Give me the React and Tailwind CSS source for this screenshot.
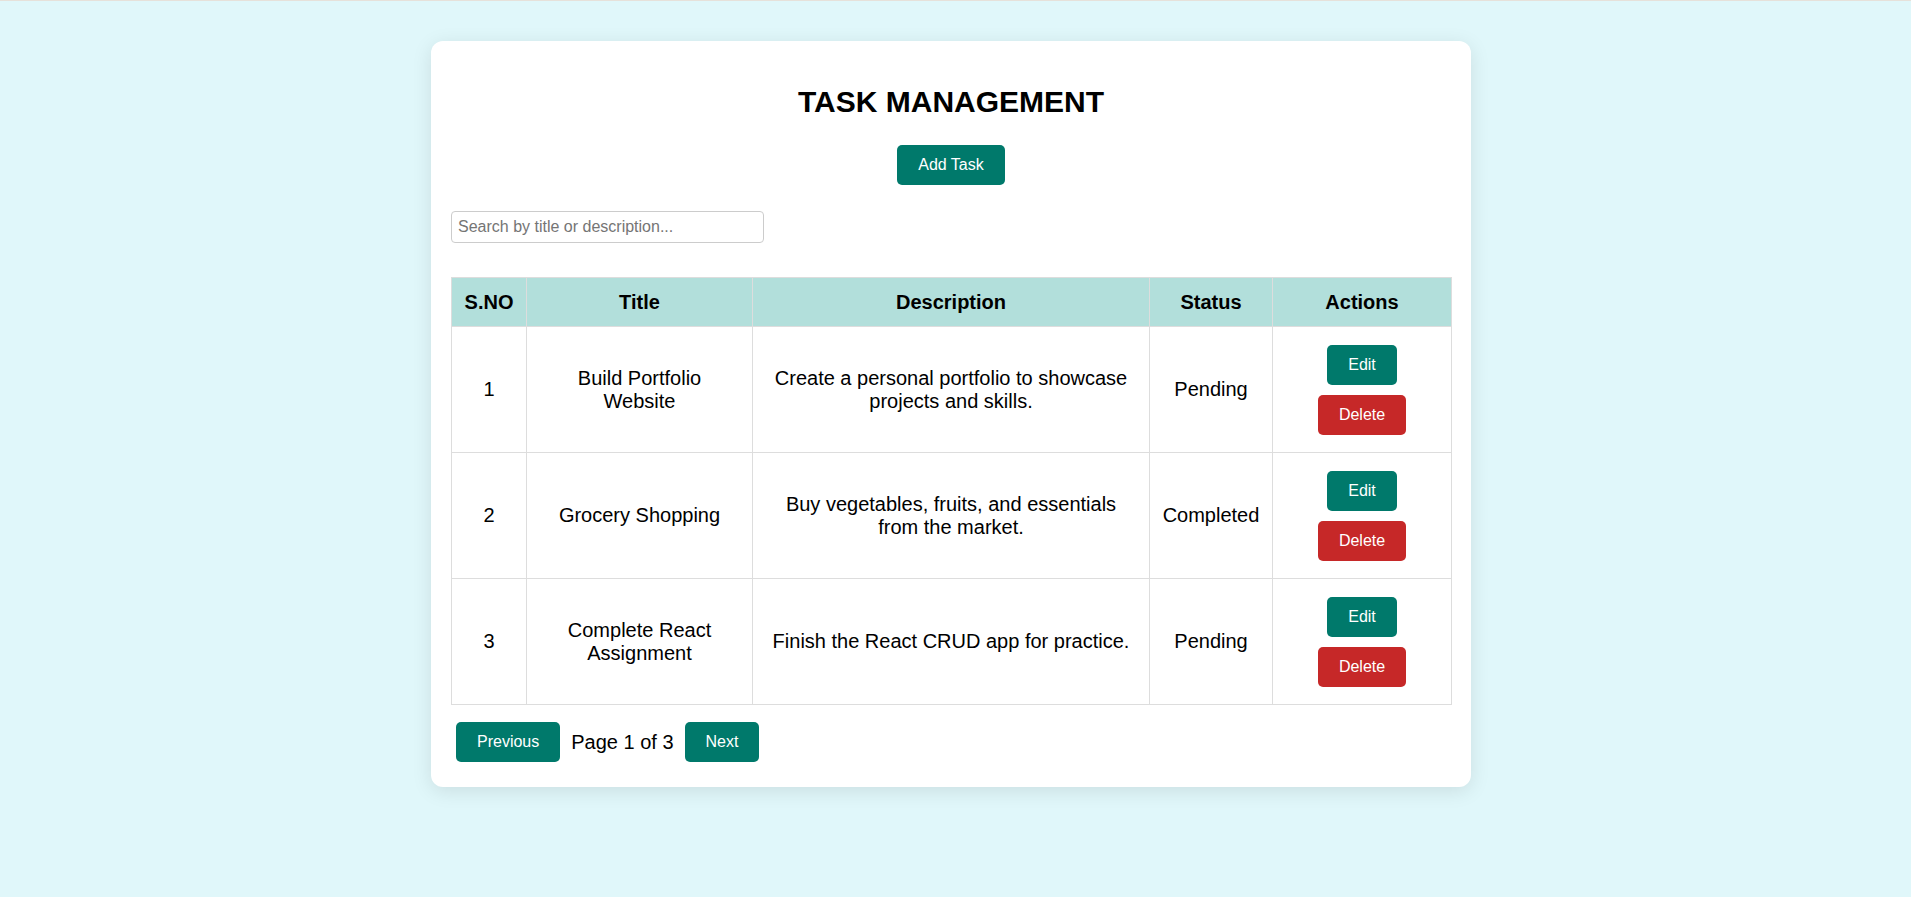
import React, { useState } from "react";

const tasks = [
	{
		id: 1,
		title: "Build Portfolio Website",
		description: "Create a personal portfolio to showcase projects and skills.",
		status: "Pending",
	},
	{
		id: 2,
		title: "Grocery Shopping",
		description: "Buy vegetables, fruits, and essentials from the market.",
		status: "Completed",
	},
	{
		id: 3,
		title: "Complete React Assignment",
		description: "Finish the React CRUD app for practice.",
		status: "Pending",
	},
];

const tealBtn =
	"bg-[#00796b] hover:bg-[#00695c] text-white text-base leading-[20px] py-[10px] px-[21px] rounded-[5px] cursor-pointer";
const redBtn =
	"bg-[#c62828] hover:bg-[#b71c1c] text-white text-base leading-[20px] py-[10px] px-[21px] rounded-[5px] cursor-pointer";

const App = () => {
	const [search, setSearch] = useState("");
	const [page] = useState(1);

	const filtered = tasks.filter(
		(t) =>
			t.title.toLowerCase().includes(search.toLowerCase()) ||
			t.description.toLowerCase().includes(search.toLowerCase())
	);

	return (
		<div
			className="min-h-screen bg-[#e0f7fa] text-black"
			style={{ fontFamily: '"Liberation Sans", Arial, sans-serif' }}
		>
			<div className="h-px bg-[#e6e1da]" />
			<div className="flex justify-center pr-[9px] pt-10 pb-10">
				{/* card */}
				<div className="w-[1040px] bg-white rounded-xl p-5 shadow-[0_4px_20px_rgba(0,0,0,0.1)]">
					<h1 className="text-center text-[30px] font-bold leading-[34px] mt-[24px]">
						TASK MANAGEMENT
					</h1>

					<div className="flex justify-center mt-[26px]">
						<button className={tealBtn}>Add Task</button>
					</div>

					<div className="mt-[26px]">
						<input
							type="text"
							className="w-[313px] border border-[#cccccc] rounded-[4px] px-1.5 py-1.5 text-base leading-[18px] placeholder:text-[#757575] focus:outline-none"
							placeholder="Search by title or description..."
							value={search}
							onChange={(e) => setSearch(e.target.value)}
						/>
					</div>

					{/* table */}
					<table className="mt-[34px] w-[1000px] table-fixed border-collapse text-[20px] leading-[23px]">
						<colgroup>
							<col className="w-[75px]" />
							<col className="w-[226px]" />
							<col className="w-[397px]" />
							<col className="w-[123px]" />
							<col className="w-[179px]" />
						</colgroup>
						<thead className="bg-[#b2dfdb]">
							<tr>
								<th className="border border-[#dddddd] px-3 py-[12.5px] font-bold text-center">S.NO</th>
								<th className="border border-[#dddddd] px-3 py-[12.5px] font-bold text-center">Title</th>
								<th className="border border-[#dddddd] px-3 py-[12.5px] font-bold text-center">Description</th>
								<th className="border border-[#dddddd] px-3 py-[12.5px] font-bold text-center">Status</th>
								<th className="border border-[#dddddd] px-3 py-[12.5px] font-bold text-center">Actions</th>
							</tr>
						</thead>
						<tbody>
							{filtered.map((task) => (
								<tr key={task.id}>
									<td className="border border-[#dddddd] p-3 text-center align-middle">{task.id}</td>
									<td className="border border-[#dddddd] p-3 text-center align-middle">
										<div className="max-w-[195px] mx-auto">{task.title}</div>
									</td>
									<td className="border border-[#dddddd] p-3 text-center align-middle">
										{task.description}
									</td>
									<td className="border border-[#dddddd] p-3 text-center align-middle">{task.status}</td>
									<td className="border border-[#dddddd] p-3 text-center align-middle">
										<div className="flex flex-col items-center gap-[10px] py-[5.5px]">
											<button className={tealBtn}>Edit</button>
											<button className={redBtn}>Delete</button>
										</div>
									</td>
								</tr>
							))}
						</tbody>
					</table>

					{/* pagination */}
					<div className="flex items-center mt-3">
						<button className={`${tealBtn} m-[5px]`}>Previous</button>
						<span className="text-[20px] leading-[23px] mx-[6px]">Page {page} of 3</span>
						<button className={`${tealBtn} m-[5px]`}>Next</button>
					</div>
				</div>
			</div>
		</div>
	);
};

export default App;
